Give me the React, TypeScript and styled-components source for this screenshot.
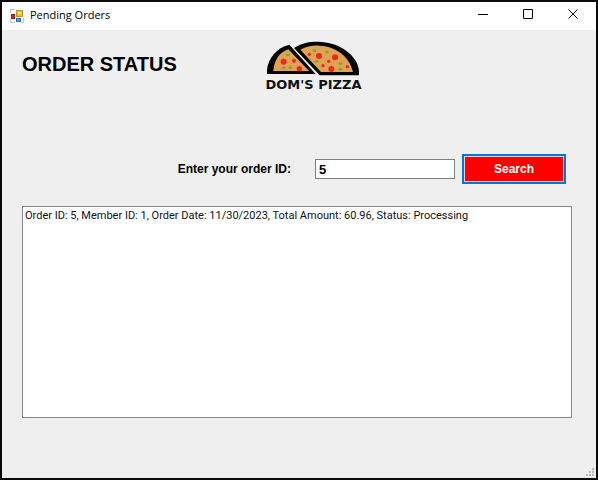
import React, { useState } from "react";
import styled, { createGlobalStyle } from "styled-components";

const GlobalStyle = createGlobalStyle`
  * { box-sizing: border-box; }
  body {
    margin: 0;
    background: #efefef;
    color: #000;
    font-family: "Liberation Sans", Arial, sans-serif;
    font-size: 12px;
  }
`;

const Window = styled.div`
  display: flex;
  flex-direction: column;
  min-height: 100vh;
  border: 2px solid #0a0a0a;
  background: #efefef;
`;

const TitleBar = styled.header`
  display: flex;
  align-items: center;
  height: 28px;
  padding-left: 8px;
  background: #fff;
`;

const WindowTitle = styled.span`
  flex: 1;
  margin-left: 6px;
  padding-bottom: 2px;
  font-family: "Open Sans", sans-serif;
  font-size: 11px;
  line-height: 16px;
`;

const CaptionButton = styled.button`
  display: flex;
  align-items: center;
  justify-content: center;
  width: 45px;
  height: 28px;
  padding: 0 0 4px;
  border: 0;
  background: transparent;
`;

const Content = styled.main`
  display: flex;
  flex: 1;
  flex-direction: column;
  padding: 10px 24px 60px 20px;
`;

const Heading = styled.div`
  display: grid;
  grid-template-columns: 240px 1fr;
  align-items: start;
  height: 114px;
`;

const PageTitle = styled.h1`
  margin: 12px 0 0;
  font-size: 20px;
  line-height: 24px;
  font-weight: 700;
`;

const Brand = styled.div`
  display: flex;
  flex-direction: column;
  align-items: center;
  justify-self: start;
`;

const BrandName = styled.span`
  font-family: "DejaVu Sans", sans-serif;
  font-size: 13px;
  line-height: 16px;
  font-weight: 700;
  color: #111;
`;

const SearchForm = styled.form`
  display: flex;
  align-items: center;
  justify-content: flex-end;
  margin-right: 6px;
`;

const FieldLabel = styled.label`
  margin-right: 24px;
  font-weight: 700;
`;

const OrderInput = styled.input`
  width: 140px;
  height: 20px;
  margin-right: 7px;
  padding: 0 3px;
  border: 1px solid #7f7f7f;
  border-radius: 0;
  background: #fff;
  color: #000;
  font: 700 13px "Liberation Sans", Arial, sans-serif;
  outline: none;
`;

const SearchButton = styled.button`
  width: 104px;
  height: 30px;
  padding: 0;
  border: 2px solid #0078d7;
  border-radius: 0;
  background: #f00;
  box-shadow: inset 0 0 0 1px #e3cfd5;
  color: #fff;
  font: 700 12px "Liberation Sans", Arial, sans-serif;
`;

const Results = styled.ul`
  flex: 1;
  margin: 22px 0 0;
  padding: 2px;
  border: 1px solid #828790;
  background: #fff;
  list-style: none;
`;

const Result = styled.li`
  color: #111;
  font-family: Roboto, "Liberation Sans", sans-serif;
  font-size: 11px;
  line-height: 14px;
`;

const StatusBar = styled.footer`
  display: flex;
  justify-content: flex-end;
  height: 10px;
  padding-right: 2px;
  margin-top: -10px;
`;

function FormIcon() {
  return (
    <svg width="14" height="14" viewBox="0 0 14 14" aria-hidden="true">
      <path d="M.5 4V.5H5M.5 10v3.5H5M11 13.5h2.5V9" fill="none" stroke="#c5c5c5" />
      <rect x="6.5" y="1.5" width="6" height="6" fill="#f5bd22" stroke="#b8942e" />
      <rect x="8" y="3" width="3" height="2" fill="#ffe27b" />
      <rect x="1.500" y="5.500" width="3" height="4" fill="#cf3022" stroke="#8f1d16" />
      <rect x="6.500" y="9.500" width="4" height="3" fill="#5b94ec" stroke="#2d65c5" />
    </svg>
  );
}

function PizzaLogo() {
  const red = [
    [101, 80, 9], [132, 77, 6], [148, 101, 8], [178, 58, 5], [207, 63, 9],
    [255, 67, 9], [236, 79, 5], [219, 92, 5], [244, 102, 9], [292, 95, 5],
  ];
  const green = [
    [114, 60], [101, 99], [121, 98], [194, 47], [231, 51], [200, 79], [271, 86], [271, 103],
  ];
  return (
    <svg width="103" height="37" viewBox="36 15 309 111" aria-hidden="true">
      <path d="M51 117V104C54 70 80 38 118 29L197 117Z" fill="#050505" />
      <path d="M70 108C72 77 87 53 115 43L177 108Z" fill="#dfa452" />
      <path d="M132 39C158 23 177 20 203 20C269 21 323 61 327 108V121H209Z" fill="#050505" />
      <path d="M151 44C170 34 188 31 207 32C257 33 299 65 309 111H213Z" fill="#dfa452" />
      {red.map(([x, y, r]) => <circle key={`${x}-${y}`} cx={x} cy={y} r={r} fill="#f12521" />)}
      {green.map(([x, y]) => <ellipse key={`${x}-${y}`} cx={x} cy={y} rx="6" ry="4" fill="#8a9d42" />)}
    </svg>
  );
}

function SizeGrip() {
  return (
    <svg width="8" height="8" viewBox="0 0 8 8" fill="#b8b8b8" aria-hidden="true">
      <path d="M6 0h2v2H6zM3 3h2v2H3zM6 3h2v2H6zM0 6h2v2H0zM3 6h2v2H3zM6 6h2v2H6z" />
    </svg>
  );
}

const orders = [
  "Order ID: 5, Member ID: 1, Order Date: 11/30/2023, Total Amount: 60.96, Status: Processing",
];

export default function App() {
  const [orderId, setOrderId] = useState("5");
  return (
    <>
      <GlobalStyle />
      <Window>
        <TitleBar>
          <FormIcon />
          <WindowTitle>Pending Orders</WindowTitle>
          <CaptionButton type="button" aria-label="Minimize">
            <svg width="11" height="11" viewBox="0 0 11 11"><path d="M0 5.5h10" stroke="#000" /></svg>
          </CaptionButton>
          <CaptionButton type="button" aria-label="Maximize">
            <svg width="11" height="11" viewBox="0 0 11 11"><path d="M.5.5h9v9h-9z" fill="none" stroke="#000" /></svg>
          </CaptionButton>
          <CaptionButton type="button" aria-label="Close">
            <svg width="11" height="11" viewBox="0 0 11 11"><path d="M.5.5l9 9M9.5.5l-9 9" stroke="#000" /></svg>
          </CaptionButton>
        </TitleBar>
        <Content>
          <Heading>
            <PageTitle>ORDER STATUS</PageTitle>
            <Brand>
              <PizzaLogo />
              <BrandName>DOM'S PIZZA</BrandName>
            </Brand>
          </Heading>
          <SearchForm onSubmit={(event) => event.preventDefault()}>
            <FieldLabel htmlFor="order-id">Enter your order ID:</FieldLabel>
            <OrderInput id="order-id" value={orderId} onChange={(event) => setOrderId(event.target.value)} />
            <SearchButton type="submit">Search</SearchButton>
          </SearchForm>
          <Results aria-label="Orders">
            {orders.map((order) => <Result key={order}>{order}</Result>)}
          </Results>
        </Content>
        <StatusBar><SizeGrip /></StatusBar>
      </Window>
    </>
  );
}
